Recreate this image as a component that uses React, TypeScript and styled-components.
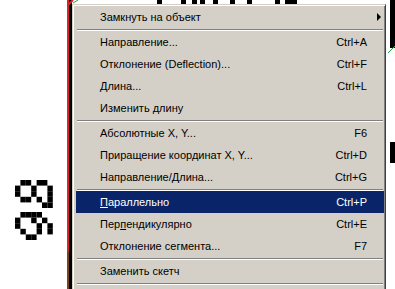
import React from 'react';
import styled, { createGlobalStyle } from 'styled-components';

type MenuEntry =
  | { kind: 'item'; label: string; mnemonic?: number; shortcut?: string; submenu?: boolean; active?: boolean }
  | { kind: 'sep' };

const entries: MenuEntry[] = [
  { kind: 'item', label: 'Замкнуть на объект', submenu: true },
  { kind: 'sep' },
  { kind: 'item', label: 'Направление...', shortcut: 'Ctrl+A' },
  { kind: 'item', label: 'Отклонение (Deflection)...', shortcut: 'Ctrl+F' },
  { kind: 'item', label: 'Длина...', shortcut: 'Ctrl+L' },
  { kind: 'item', label: 'Изменить длину' },
  { kind: 'sep' },
  { kind: 'item', label: 'Абсолютные X, Y...', shortcut: 'F6' },
  { kind: 'item', label: 'Приращение координат X, Y...', shortcut: 'Ctrl+D' },
  { kind: 'item', label: 'Направление/Длина...', shortcut: 'Ctrl+G' },
  { kind: 'sep' },
  { kind: 'item', label: 'Параллельно', mnemonic: 0, shortcut: 'Ctrl+P', active: true },
  { kind: 'item', label: 'Перпендикулярно', mnemonic: 3, shortcut: 'Ctrl+E' },
  { kind: 'item', label: 'Отклонение сегмента...', shortcut: 'F7' },
  { kind: 'sep' },
  { kind: 'item', label: 'Заменить скетч' },
  { kind: 'sep' },
];

// pixel glyphs drawn on the sketch canvas, 1 = filled cell
const glyphs = [
  { x: 15, y: 180, rows: ['.XX.XX.', 'X..X..X', 'X..X..X', '.XX.X.X', '.....XX'] },
  { x: 15, y: 212, rows: ['.XXXX..', 'X..X.X.', 'X...X.X', '.X..X.X', '..XX...'] },
];
const CELL_W = 5.4;
const CELL_H = 5.6;

const GlobalStyle = createGlobalStyle`
  html, body {
    margin: 0;
    padding: 0;
    background: #fff;
  }
  body {
    overflow: hidden;
  }
`;

const Screen = styled.div`
  position: relative;
  width: 395px;
  height: 289px;
  overflow: hidden;
  background: #fff;
`;

const Canvas = styled.svg`
  position: absolute;
  left: 0;
  top: 0;
`;

const Menu = styled.div`
  position: absolute;
  left: 72px;
  top: 4px;
  width: 314px;
  box-sizing: border-box;
  padding: 1px 1px 30px 3px;
  background: #d4d0c8;
  border: 1px solid;
  border-color: #d4d0c8 #404040 #404040 #d4d0c8;
  box-shadow: inset 1px 1px #fff, inset -1px -1px #808080;
  font-family: "Liberation Sans", Arial, sans-serif;
  font-size: 11px;
  color: #000;
`;

const Item = styled.div<{ $active?: boolean }>`
  position: relative;
  display: flex;
  align-items: center;
  height: 22px;
  padding: 0 17px 0 24px;
  background: ${(p) => (p.$active ? '#0a246a' : 'transparent')};
  color: ${(p) => (p.$active ? '#fff' : '#000')};
  white-space: nowrap;
`;

const Label = styled.span`
  flex: 1;
`;

const Mnemonic = styled.span`
  text-decoration: underline;
`;

const Shortcut = styled.span`
  margin-left: 20px;
`;

const Arrow = styled.span`
  position: absolute;
  right: 3px;
  top: 50%;
  margin-top: -4px;
  width: 0;
  height: 0;
  border-style: solid;
  border-width: 4px 0 4px 4px;
  border-color: transparent transparent transparent currentColor;
`;

const Separator = styled.div`
  display: flex;
  flex-direction: column;
  justify-content: center;
  height: 3px;
  padding: 0 1px;

  &::before {
    content: '';
    height: 1px;
    background: #808080;
  }
  &::after {
    content: '';
    height: 1px;
    background: #fff;
  }
`;

const renderLabel = (label: string, mnemonic?: number) => {
  if (mnemonic === undefined) return label;
  return (
    <>
      {label.slice(0, mnemonic)}
      <Mnemonic>{label[mnemonic]}</Mnemonic>
      {label.slice(mnemonic + 1)}
    </>
  );
};

const SketchCanvas = () => (
  <Canvas width={395} height={289} viewBox="0 0 395 289">
    {/* glyph stubs peeking above the menu */}
    {[157, 181, 192, 200, 213, 230, 247, 275, 285].map((x, i) => (
      <rect key={i} x={x} y={0} width={i === 8 ? 12 : 5} height={4} fill="#000" />
    ))}
    {/* sketch lines along the menu's left edge */}
    <rect x={67} y={0} width={2} height={252} fill="#e0202a" />
    <rect x={67} y={252} width={2} height={37} fill="#7a4318" />
    <rect x={69} y={0} width={3} height={289} fill="#000" />
    <line x1={68} y1={5} x2={73} y2={0} stroke="#e0202a" strokeWidth={2} />
    <line x1={73} y1={3} x2={78} y2={0} stroke="#2aa040" strokeWidth={1} />
    {/* right edge */}
    <rect x={390} y={0} width={5} height={48} fill="#000" />
    <line x1={388} y1={53} x2={395} y2={46} stroke="#2aa040" strokeWidth={1} />
    <rect x={390} y={142} width={5} height={21} fill="#000" />
    {glyphs.map((g, gi) =>
      g.rows.map((row, r) =>
        row.split('').map((c, col) =>
          c === 'X' ? (
            <rect
              key={`${gi}-${r}-${col}`}
              x={g.x + col * CELL_W}
              y={g.y + r * CELL_H}
              width={CELL_W}
              height={CELL_H}
              fill="#000"
            />
          ) : null
        )
      )
    )}
  </Canvas>
);

export default function App() {
  return (
    <>
      <GlobalStyle />
      <Screen>
        <SketchCanvas />
        <Menu>
          {entries.map((e, i) =>
            e.kind === 'sep' ? (
              <Separator key={i} />
            ) : (
              <Item key={i} $active={e.active}>
                <Label>{renderLabel(e.label, e.mnemonic)}</Label>
                {e.shortcut && <Shortcut>{e.shortcut}</Shortcut>}
                {e.submenu && <Arrow />}
              </Item>
            )
          )}
        </Menu>
      </Screen>
    </>
  );
}
